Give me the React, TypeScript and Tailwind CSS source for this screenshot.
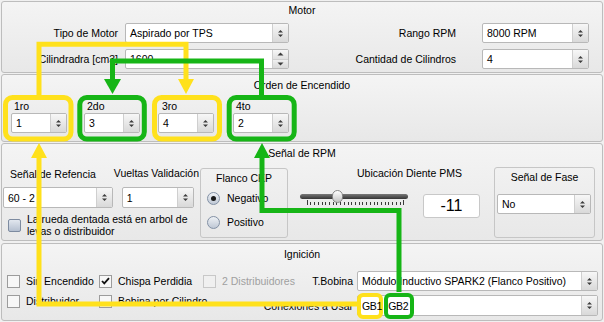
import React from "react";

const Y = "#ffe11c";
const G = "#16b516";

function UpDown() {
  return (
    <svg width="7" height="9" viewBox="0 0 7 9">
      <path d="M1 3.5 L3.5 1 L6 3.5 Z M1 5.5 L3.5 8 L6 5.5 Z" fill="#3c3c3c" />
    </svg>
  );
}

function Combo({
  children,
  className,
  clip = true,
}: {
  children: React.ReactNode;
  className: string;
  clip?: boolean;
}) {
  return (
    <div
      className={`flex shrink-0 bg-white border border-[#b8b8b8] rounded-[2px] ${clip ? "overflow-hidden" : ""} ${className}`}
    >
      <div className={`flex-1 pl-[4px] flex items-center whitespace-nowrap ${clip ? "overflow-hidden" : ""}`}>
        {children}
      </div>
      <div className="w-[16px] border-l border-[#cfcfcf] bg-linear-to-b from-[#f7f7f7] to-[#d9d9d9] flex items-center justify-center">
        <UpDown />
      </div>
    </div>
  );
}

function SpinPair({ children, className }: { children: React.ReactNode; className: string }) {
  return (
    <div className={`flex shrink-0 bg-white border border-[#b8b8b8] rounded-[2px] overflow-hidden ${className}`}>
      <div className="flex-1 pl-[4px] flex items-center whitespace-nowrap">{children}</div>
      <div className="w-[16px] flex flex-col">
        <div className="flex-1 border-l border-b border-[#cfcfcf] bg-linear-to-b from-[#f7f7f7] to-[#e0e0e0] flex items-center justify-center">
          <svg width="7" height="4" viewBox="0 0 7 4"><path d="M0.5 3.5 L3.5 0.5 L6.5 3.5 Z" fill="#3c3c3c" /></svg>
        </div>
        <div className="flex-1 border-l border-[#cfcfcf] bg-linear-to-b from-[#f0f0f0] to-[#d9d9d9] flex items-center justify-center">
          <svg width="7" height="4" viewBox="0 0 7 4"><path d="M0.5 0.5 L3.5 3.5 L6.5 0.5 Z" fill="#3c3c3c" /></svg>
        </div>
      </div>
    </div>
  );
}

function Check({ checked, disabled }: { checked?: boolean; disabled?: boolean }) {
  return (
    <div
      className={`w-[13px] h-[13px] shrink-0 border flex items-center justify-center ${
        disabled ? "border-[#c8c8c8] bg-[#f0f0f0]" : "border-[#9c9c9c] bg-[#f7f7f7]"
      }`}
    >
      {checked && (
        <svg width="9" height="8" viewBox="0 0 9 8">
          <path d="M1 4 L3.3 6.4 L8 1.2" stroke="#111" strokeWidth="1.8" fill="none" />
        </svg>
      )}
    </div>
  );
}

function Radio({ checked }: { checked?: boolean }) {
  return (
    <div className="w-[13px] h-[13px] shrink-0 rounded-full border border-[#8391a5] bg-linear-to-b from-[#eef1f5] to-[#bfc8d5] flex items-center justify-center">
      {checked && <div className="w-[5px] h-[5px] rounded-full bg-[#1a1a1a]" />}
    </div>
  );
}

function Ticks() {
  const xs = Array.from({ length: 27 }, (_, i) => 6.7 + i * 3.715);
  return (
    <svg width="108" height="6" viewBox="0 0 108 6" className="absolute left-0 top-[10px]">
      {xs.map((x, i) => (
        <line
          key={i}
          x1={Math.round(x) + 0.5}
          x2={Math.round(x) + 0.5}
          y1={i === 0 || i === 26 ? 0 : 2}
          y2={5}
          stroke="#3a3a3a"
          strokeWidth="1"
        />
      ))}
    </svg>
  );
}

const groupCls =
  "border border-[#bdbdbd] rounded-[3px] bg-linear-to-b from-[#f4f4f4] to-[#e8e8e8] flex flex-col";

export default function App() {
  return (
    <div className="relative w-[604px] h-[322px] overflow-hidden bg-[#f0f0f0] font-['Liberation_Sans',Arial,sans-serif] text-[10.5px] leading-[14px] text-black">
      <div className="flex flex-col pt-[1px] px-[1px] gap-[1px]">
        {/* Motor */}
        <div className={`h-[72px] ${groupCls}`}>
          <div className="pt-[1px] h-[15px] text-center">Motor</div>
          <div className="mt-[6px] flex items-center h-[20px]">
            <div className="w-[116px] text-right">Tipo de Motor</div>
            <Combo className="ml-[7px] w-[164px] h-[20px]">Aspirado por TPS</Combo>
            <div className="w-[167px] text-right">Rango RPM</div>
            <Combo className="ml-[26px] w-[107px] h-[20px]">8000 RPM</Combo>
          </div>
          <div className="mt-[6px] flex items-center h-[20px]">
            <div className="w-[116px] text-right">Cilindradra [cm3]</div>
            <SpinPair className="ml-[7px] w-[164px] h-[20px]">1600</SpinPair>
            <div className="w-[167px] text-right">Cantidad de Cilindros</div>
            <Combo className="ml-[26px] w-[107px] h-[20px]">4</Combo>
          </div>
        </div>

        {/* Orden de Encendido */}
        <div className={`h-[68px] ${groupCls}`}>
          <div className="pt-[3px] h-[17px] text-center">Orden de Encendido</div>
          <div className="mt-[7px] flex pl-[9px]">
            <div className="w-[73px] flex flex-col">
              <div className="h-[14px] pl-[3px]">1ro</div>
              <Combo className="w-[56px] h-[20px]">1</Combo>
            </div>
            <div className="w-[74px] flex flex-col">
              <div className="h-[14px] pl-[3px]">2do</div>
              <Combo className="w-[56px] h-[20px]">3</Combo>
            </div>
            <div className="w-[75px] flex flex-col">
              <div className="h-[14px] pl-[4px]">3ro</div>
              <Combo className="w-[56px] h-[20px]">4</Combo>
            </div>
            <div className="w-[74px] flex flex-col">
              <div className="h-[14px] pl-[3px]">4to</div>
              <Combo className="w-[56px] h-[20px]">2</Combo>
            </div>
          </div>
        </div>

        {/* Señal de RPM */}
        <div className={`h-[98px] ${groupCls}`}>
          <div className="pt-[2px] h-[16px] text-center">Señal de RPM</div>
          <div className="flex items-start">
            <div className="ml-[1px] w-[196px] flex flex-col">
              <div className="flex">
                <div className="w-[112px] flex flex-col">
                  <div className="mt-[7px] h-[14px] pl-[7px] whitespace-nowrap">Señal de Refencia</div>
                  <Combo className="mt-[6px] w-[110px] h-[21px]">60 - 2</Combo>
                </div>
                <div className="flex flex-col">
                  <div className="mt-[6px] h-[14px] whitespace-nowrap">Vueltas Validación</div>
                  <Combo className="mt-[7px] ml-[8px] w-[72px] h-[21px]">1</Combo>
                </div>
              </div>
              <div className="mt-[5px] flex items-center">
                <div className="ml-[5px] w-[13px] h-[13px] rounded-[2px] border border-[#7d8ba0] bg-linear-to-b from-[#e2e7ef] to-[#b5c0d0]" />
                <div className="ml-[6px] leading-[12px] whitespace-nowrap">
                  La rueda dentada está en arbol de
                  <br />
                  levas o distribuidor
                </div>
              </div>
            </div>

            <div className="ml-[1px] mt-[8px] w-[88px] h-[70px] border border-[#c6c6c6] rounded-[3px] flex flex-col">
              <div className="pt-[2px] h-[16px] text-center">Flanco CKP</div>
              <div className="mt-[6px] h-[14px] pl-[6px] flex items-center gap-[7px]">
                <Radio checked />
                <span>Negativo</span>
              </div>
              <div className="mt-[10px] h-[14px] pl-[6px] flex items-center gap-[7px]">
                <Radio />
                <span>Positivo</span>
              </div>
            </div>

            <div className="w-[206px] flex flex-col">
              <div className="mt-[6px] h-[14px] pl-[69px] whitespace-nowrap">Ubicación Diente PMS</div>
              <div className="mt-[10px] flex items-start">
                <div className="relative ml-[12px] w-[108px] h-[16px]">
                  <div className="absolute left-0 right-0 top-[4px] h-[5px] rounded-[3px] bg-linear-to-b from-[#7a7a7a] to-[#353535]" />
                  <Ticks />
                  <div className="absolute left-[32px] top-0 w-[11px] h-[13px] rounded-full border border-[#8a8a8a] bg-linear-to-b from-[#ffffff] to-[#c4c4c4]" />
                </div>
                <div className="ml-[15px] mt-[4px] w-[57px] h-[24px] bg-white border border-[#c8c8c8] rounded-[3px] flex items-center justify-center text-[16px] leading-[20px]">
                  -11
                </div>
              </div>
            </div>

            <div className="mt-[7px] w-[101px] h-[71px] border border-[#c6c6c6] rounded-[3px] flex flex-col">
              <div className="pt-[2px] h-[16px] text-center">Señal de Fase</div>
              <Combo className="mt-[10px] ml-[2px] w-[94px] h-[20px]">No</Combo>
            </div>
          </div>
        </div>

        {/* Ignición */}
        <div className={`mt-[1px] h-[78px] ${groupCls}`}>
          <div className="pt-[3px] h-[17px] text-center">Ignición</div>
          <div className="flex items-start">
            <div className="mt-[10px] ml-[5px] w-[296px] shrink-0 flex flex-col">
              <div className="h-[20px] flex items-center">
                <div className="w-[92px] shrink-0 flex items-center gap-[6px]">
                  <Check />
                  <span className="whitespace-nowrap">Sin Encendido</span>
                </div>
                <div className="w-[104px] shrink-0 flex items-center gap-[6px]">
                  <Check checked />
                  <span className="whitespace-nowrap">Chispa Perdidia</span>
                </div>
                <div className="w-[100px] shrink-0 flex items-center gap-[6px]">
                  <Check disabled />
                  <span className="whitespace-nowrap text-[#a0a0a0]">2 Distribuidores</span>
                </div>
              </div>
              <div className="h-[20px] flex items-center">
                <div className="w-[92px] shrink-0 flex items-center gap-[6px]">
                  <Check />
                  <span className="whitespace-nowrap">Distribuidor</span>
                </div>
                <div className="w-[104px] shrink-0 flex items-center gap-[6px]">
                  <Check />
                  <span className="whitespace-nowrap">Bobina por Cilindro</span>
                </div>
              </div>
            </div>
            <div className="flex-1 min-w-0 mt-[10px] flex flex-col">
              <div className="h-[20px] flex items-center">
                <div className="flex-1 min-w-0 flex justify-end whitespace-nowrap">T.Bobina</div>
                <Combo className="ml-[4px] mr-[4px] w-[241px] h-[20px]">Módulo Inductivo SPARK2 (Flanco Positivo)</Combo>
              </div>
              <div className="mt-[4px] h-[21px] flex items-center">
                <div className="flex-1 min-w-0 flex justify-end whitespace-nowrap">
                  <span>Conexiones a Usar</span>
                </div>
                <Combo className="ml-[4px] mr-[4px] w-[241px] h-[21px]" clip={false}>
                  <span className="relative">
                    <span className="absolute left-[-5px] top-[-6px] w-[26px] h-[26px] border-4 border-[#ffe11c] rounded-[6px]" />
                    <span className="relative tracking-[-0.3px]">GB1</span>
                  </span>
                  <span className="relative ml-[6px]">
                    <span className="absolute left-[-4px] top-[-6px] w-[30px] h-[26px] border-4 border-[#16b516] rounded-[6px]" />
                    <span className="relative tracking-[-0.3px]">GB2</span>
                  </span>
                </Combo>
              </div>
            </div>
          </div>
        </div>
      </div>

      {/* annotation overlay */}
      <svg
        className="absolute left-0 top-0 pointer-events-none"
        width="604"
        height="322"
        viewBox="0 0 604 322"
        fill="none"
      >
        <rect x="5.5" y="97.5" width="65.5" height="41.5" rx="7" stroke={Y} strokeWidth="5" />
        <rect x="154.5" y="97.5" width="65" height="41.5" rx="7" stroke={Y} strokeWidth="5" />
        <rect x="79.8" y="97.5" width="64.5" height="41.5" rx="7" stroke={G} strokeWidth="5" />
        <rect x="229.2" y="97.5" width="65" height="41.5" rx="7" stroke={G} strokeWidth="5" />

        <path d="M39 95 V44.2 H186 V80" stroke={Y} strokeWidth="5" />
        <path d="M178 79 H194 L186 94 Z" fill={Y} />
        <path d="M39 157 V304 H358" stroke={Y} strokeWidth="5" />
        <path d="M31 158 H47 L39 143 Z" fill={Y} />

        <path d="M261.5 95 V61 H112.5 V80" stroke={G} strokeWidth="5" />
        <path d="M104 79 H121 L112.5 94 Z" fill={G} />
        <path d="M399 292 V210.5 H262 V157" stroke={G} strokeWidth="5" />
        <path d="M254 158 H270 L262 143 Z" fill={G} />
      </svg>
    </div>
  );
}
